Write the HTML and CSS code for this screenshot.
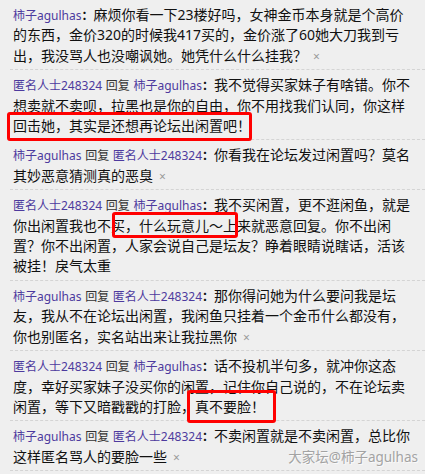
FILE: index.html
```html
<!DOCTYPE html>
<html lang="zh-CN">
<head>
  <meta charset="UTF-8">
  <meta name="viewport" content="width=device-width, initial-scale=1.0">
  <title>回复</title>
  <link rel="stylesheet" href="styles.css">
</head>
<body>
  <div class="list">
    <div class="item">
      <span class="user">柿子agulhas</span><span class="colon">：</span>麻烦你看一下23楼好吗，女神金币本身就是个高价的东西，金价320的时候我417买的，金价涨了60她大刀我到亏出，我没骂人也没嘲讽她。她凭什么什么挂我？<span class="del">×</span>
    </div>
    <div class="item">
      <span class="user">匿名人士248324</span> <span class="reply">回复</span> <span class="user">柿子agulhas</span><span class="colon">：</span>我不觉得买家妹子有啥错。你不想卖就不卖呗，拉黑也是你的自由，你不用找我们认同，你这样<span class="mark mark-a">回击她，其实是还想再论坛出闲置吧！</span>
    </div>
    <div class="item">
      <span class="user">柿子agulhas</span> <span class="reply">回复</span> <span class="user">匿名人士248324</span><span class="colon">：</span>你看我在论坛发过闲置吗？莫名其妙恶意猜测真的恶臭<span class="del">×</span>
    </div>
    <div class="item">
      <span class="user">匿名人士248324</span> <span class="reply">回复</span> <span class="user">柿子agulhas</span><span class="colon">：</span>我不买闲置，更不逛闲鱼，就是你出闲置我也不<span class="mark mark-b">买，什么玩意儿～上</span>来就恶意回复。你不出闲置？你不出闲置，人家会说自己是坛友？睁着眼睛说瞎话，活该被挂！戾气太重
    </div>
    <div class="item">
      <span class="user">柿子agulhas</span> <span class="reply">回复</span> <span class="user">匿名人士248324</span><span class="colon">：</span>那你得问她为什么要问我是坛友，我从不在论坛出闲置，我闲鱼只挂着一个金币什么都没有，你也别匿名，实名站出来让我拉黑你<span class="del">×</span>
    </div>
    <div class="item">
      <span class="user">匿名人士248324</span> <span class="reply">回复</span> <span class="user">柿子agulhas</span><span class="colon">：</span>话不投机半句多，就冲你这态度，幸好买家妹子没买你的闲置，记住你自己说的，不在论坛卖闲置，等下又暗戳戳的打脸，<span class="mark mark-c">真不要脸！</span>
    </div>
    <div class="item">
      <span class="user">柿子agulhas</span> <span class="reply">回复</span> <span class="user">匿名人士248324</span><span class="colon">：</span>不卖闲置就是不卖闲置，总比你这样匿名骂人的要脸一些<span class="del">×</span>
    </div>
    <div class="watermark">大家坛@柿子agulhas</div>
  </div>
</body>
</html>
```

FILE: styles.css
```css
body {
  margin: 0;
  background-color: #efefef;
  font-family: "Noto Sans", "Noto Sans CJK SC", sans-serif;
  color: #111;
}
.list {
  position: relative;
  padding-left: 10px;
}
.item {
  padding: 5px 12px 3px 3px;
  font-size: 14px;
  line-height: 20.4px;
  border-bottom: 1px dashed #d4d4d4;
}
.user,
.reply,
.colon,
.del {
  font-size: 12px;
  line-height: 1;
}
.user {
  color: #4d3a9e;
}
.reply {
  color: #333;
}
.colon {
  font-weight: bold;
  color: #111;
}
.del {
  color: #9a9a9a;
  margin-left: 6px;
}
.mark {
  display: inline-block;
  position: relative;
}
.mark::after {
  content: "";
  position: absolute;
  border: 3px solid #f00;
  border-radius: 3px;
}
.mark-a::after {
  top: -4px;
  bottom: -5px;
  left: -6px;
  right: -1px;
}
.mark-b::after {
  top: -4px;
  bottom: -2px;
  left: 1px;
  right: -1px;
}
.mark-c::after {
  top: -7px;
  bottom: -6px;
  left: -8px;
  right: -11px;
}
.watermark {
  position: absolute;
  right: 7px;
  bottom: 5px;
  font-size: 13.5px;
  line-height: 18px;
  color: #a3a3a3;
  text-shadow: 1px 1px 0 rgba(255, 255, 255, 0.7);
}
```
